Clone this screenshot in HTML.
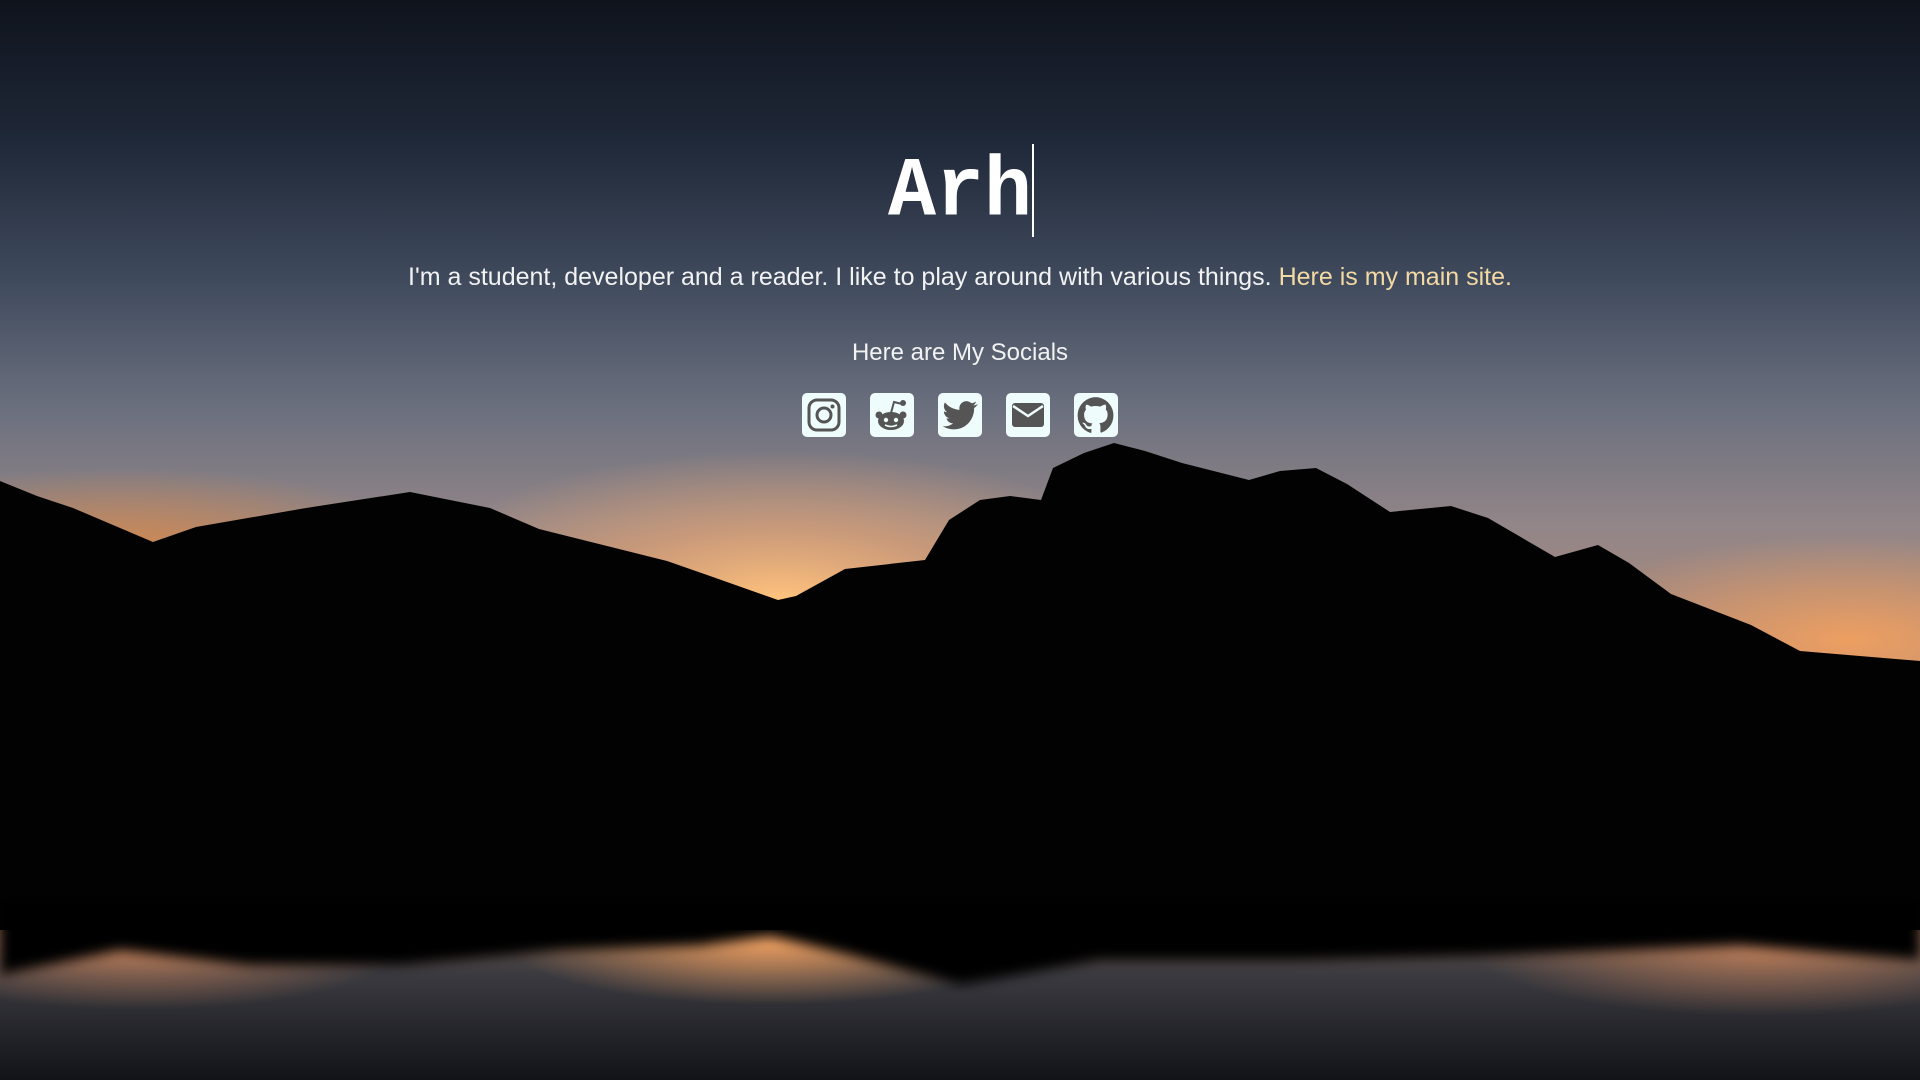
<!DOCTYPE html>
<html><head><meta charset="utf-8"><style>
html,body{margin:0;padding:0;width:1920px;height:1080px;overflow:hidden;background:#000}
#bg{position:absolute;left:0;top:0}
.c{position:absolute;left:0;width:1920px;text-align:center;color:#f2f2f2;font-family:"Liberation Sans",Arial,sans-serif}
h1{position:absolute;left:0;width:1920px;top:145px;margin:0;text-align:center;font:bold 80px "Liberation Mono",monospace;color:#fff;line-height:100px;height:100px}
.t{display:inline-block;transform:scaleY(1.06);transform-origin:50% 78%}
.cur{position:absolute;left:1032px;top:144px;width:2px;height:93px;background:#fff}
.icons{position:absolute;top:393px;left:802px}
.ic{position:absolute;width:44px;height:44px;background:#effcfc;border-radius:5px}
.ic svg{position:absolute;left:0;top:0}
</style></head><body>
<svg id="bg" width="1920" height="1080" viewBox="0 0 1920 1080">
<defs>
<linearGradient id="sky" x1="0" y1="0" x2="0" y2="1">
<stop offset="0" stop-color="#0f131c"/>
<stop offset="0.2" stop-color="#1f2838"/>
<stop offset="0.4" stop-color="#3f4a5c"/>
<stop offset="0.58" stop-color="#6a6f7e"/>
<stop offset="0.75" stop-color="#928688"/>
<stop offset="1" stop-color="#b88a74"/>
</linearGradient>
<radialGradient id="glow" cx="780" cy="600" r="300" gradientUnits="userSpaceOnUse" gradientTransform="translate(780 600) scale(1.3 0.5) translate(-780 -600)">
<stop offset="0" stop-color="#ffc47e" stop-opacity="1"/>
<stop offset="0.5" stop-color="#f0a870" stop-opacity="0.55"/>
<stop offset="1" stop-color="#f0a870" stop-opacity="0"/>
</radialGradient>
<radialGradient id="glowL" cx="120" cy="545" r="220" gradientUnits="userSpaceOnUse" gradientTransform="translate(120 545) scale(1.4 0.35) translate(-120 -545)">
<stop offset="0" stop-color="#d08850" stop-opacity="0.95"/>
<stop offset="1" stop-color="#d08850" stop-opacity="0"/>
</radialGradient>
<radialGradient id="glowR" cx="1850" cy="640" r="260" gradientUnits="userSpaceOnUse" gradientTransform="translate(1850 640) scale(1.2 0.4) translate(-1850 -640)">
<stop offset="0" stop-color="#f0a060" stop-opacity="0.95"/>
<stop offset="1" stop-color="#f0a060" stop-opacity="0"/>
</radialGradient>
<linearGradient id="water" x1="0" y1="0" x2="0" y2="1">
<stop offset="0" stop-color="#6a5448"/>
<stop offset="0.3" stop-color="#3a3a40"/>
<stop offset="1" stop-color="#121318"/>
</linearGradient>
<radialGradient id="wglow" cx="770" cy="945" r="200" gradientUnits="userSpaceOnUse" gradientTransform="translate(770 945) scale(1.3 0.3) translate(-770 -945)">
<stop offset="0" stop-color="#f0a060" stop-opacity="0.9"/>
<stop offset="1" stop-color="#f0a060" stop-opacity="0"/>
</radialGradient>
<radialGradient id="wglowL" cx="140" cy="950" r="200" gradientUnits="userSpaceOnUse" gradientTransform="translate(140 950) scale(1.3 0.3) translate(-140 -950)">
<stop offset="0" stop-color="#e09060" stop-opacity="0.7"/>
<stop offset="1" stop-color="#e09060" stop-opacity="0"/>
</radialGradient>
<radialGradient id="wglowR" cx="1760" cy="950" r="220" gradientUnits="userSpaceOnUse" gradientTransform="translate(1760 950) scale(1.3 0.3) translate(-1760 -950)">
<stop offset="0" stop-color="#e09060" stop-opacity="0.7"/>
<stop offset="1" stop-color="#e09060" stop-opacity="0"/>
</radialGradient>
<filter id="blur"><feGaussianBlur stdDeviation="6"/></filter>
</defs>
<rect width="1920" height="700" fill="url(#sky)"/>
<rect width="1920" height="700" fill="url(#glow)"/>
<rect width="1920" height="700" fill="url(#glowL)"/>
<rect width="1920" height="700" fill="url(#glowR)"/>
<rect y="930" width="1920" height="150" fill="url(#water)"/>
<rect y="900" width="1920" height="180" fill="url(#wglow)"/>
<rect y="900" width="1920" height="180" fill="url(#wglowL)"/>
<rect y="900" width="1920" height="180" fill="url(#wglowR)"/>
<path d="M0 481 L37 496 L73 508 L153 542 L196 527 L306 508 L410 492 L490 508 L539 529 L667 561 L710 576 L778 600 L796 596 L845 569 L925 560 L949 520 L980 500 L1010 496 L1041 500 L1053 468 L1084 453 L1114 443 L1145 451 L1182 463 L1249 480 L1280 471 L1316 468 L1347 484 L1390 512 L1451 506 L1488 518 L1555 557 L1598 545 L1629 563 L1671 594 L1751 625 L1800 651 L1920 661 L1920 930 L0 930 Z" fill="#020202"/>
<path d="M0 920 L0 975 L120 950 L250 965 L400 965 L560 950 L700 945 L770 935 L850 955 L960 985 L1100 960 L1300 960 L1500 955 L1740 945 L1920 960 L1920 900 L0 900 Z" fill="#020202" filter="url(#blur)"/>
</svg>
<h1><span class="t">Arh</span></h1>
<div class="cur"></div>
<div class="c" style="top:262px;font-size:25px;line-height:30px">I'm a student, developer and a reader. I like to play around with various things. <span style="color:#f3d9a4">Here is my main site.</span></div>
<div class="c" style="top:338px;font-size:24px;line-height:30px">Here are My Socials</div>
<div class="icons">
<div class="ic" style="left:0"><svg width="44" height="44" viewBox="0 0 44 44"><rect x="7" y="7" width="30" height="30" rx="8" fill="none" stroke="#555" stroke-width="3"/><circle cx="22" cy="22" r="7" fill="none" stroke="#555" stroke-width="3"/><circle cx="30.5" cy="13.5" r="2" fill="#555"/></svg></div>
<div class="ic" style="left:68px"><svg width="44" height="44" viewBox="0 0 44 44"><ellipse cx="21" cy="28" rx="13" ry="9" fill="#555"/><circle cx="9" cy="22" r="3.5" fill="#555"/><circle cx="33" cy="22" r="3.5" fill="#555"/><path d="M21 20 L24 9 L32 11" fill="none" stroke="#555" stroke-width="2"/><circle cx="33" cy="10" r="3" fill="#555"/><circle cx="16" cy="27" r="2.2" fill="#effcfc"/><circle cx="26" cy="27" r="2.2" fill="#effcfc"/><path d="M15 32 Q21 35 27 32" fill="none" stroke="#effcfc" stroke-width="1.6"/></svg></div>
<div class="ic" style="left:136px"><svg width="44" height="44" viewBox="0 0 24 24"><g transform="translate(2.5 2.5) scale(0.8)"><path fill="#555" d="M23.6 4.6c-.9.4-1.8.6-2.8.8 1-.6 1.8-1.6 2.1-2.7-.9.6-2 1-3.1 1.2A4.9 4.9 0 0 0 11.5 8.4 13.9 13.9 0 0 1 1.6 3.3a4.9 4.9 0 0 0 1.5 6.6c-.8 0-1.6-.2-2.2-.6 0 2.4 1.7 4.4 3.9 4.8-.7.2-1.5.2-2.2.1.6 2 2.4 3.4 4.6 3.4A9.9 9.9 0 0 1 0 19.5 14 14 0 0 0 7.5 21.7c9.1 0 14-7.5 14-14v-.6c1-.7 1.8-1.6 2.5-2.5z"/></g></svg></div>
<div class="ic" style="left:204px"><svg width="44" height="44" viewBox="0 0 44 44"><rect x="6" y="10" width="32" height="24" rx="3" fill="#555"/><path d="M7 13 L22 23 L37 13" fill="none" stroke="#effcfc" stroke-width="2.5"/></svg></div>
<div class="ic" style="left:272px"><svg width="44" height="44" viewBox="0 0 24 24"><g transform="translate(2 2) scale(0.833)"><path fill="#555" d="M12 .3a12 12 0 0 0-3.8 23.4c.6.1.8-.3.8-.6v-2c-3.3.7-4-1.6-4-1.6-.6-1.4-1.4-1.8-1.4-1.8-1-.7.1-.7.1-.7 1.2.1 1.8 1.2 1.8 1.2 1 1.8 2.8 1.3 3.5 1 0-.8.4-1.3.7-1.6-2.7-.3-5.5-1.3-5.5-6 0-1.2.5-2.3 1.3-3.1-.2-.4-.6-1.6 0-3.2 0 0 1-.3 3.3 1.2a11.5 11.5 0 0 1 6 0C17.3 4.9 18.3 5.2 18.3 5.2c.6 1.6.2 2.8.1 3.2.8.8 1.2 1.9 1.2 3.1 0 4.6-2.8 5.6-5.5 5.9.5.4.8 1.1.8 2.2v3.3c0 .3.2.7.8.6A12 12 0 0 0 12 .3"/></g></svg></div>
</div>
</body></html>
